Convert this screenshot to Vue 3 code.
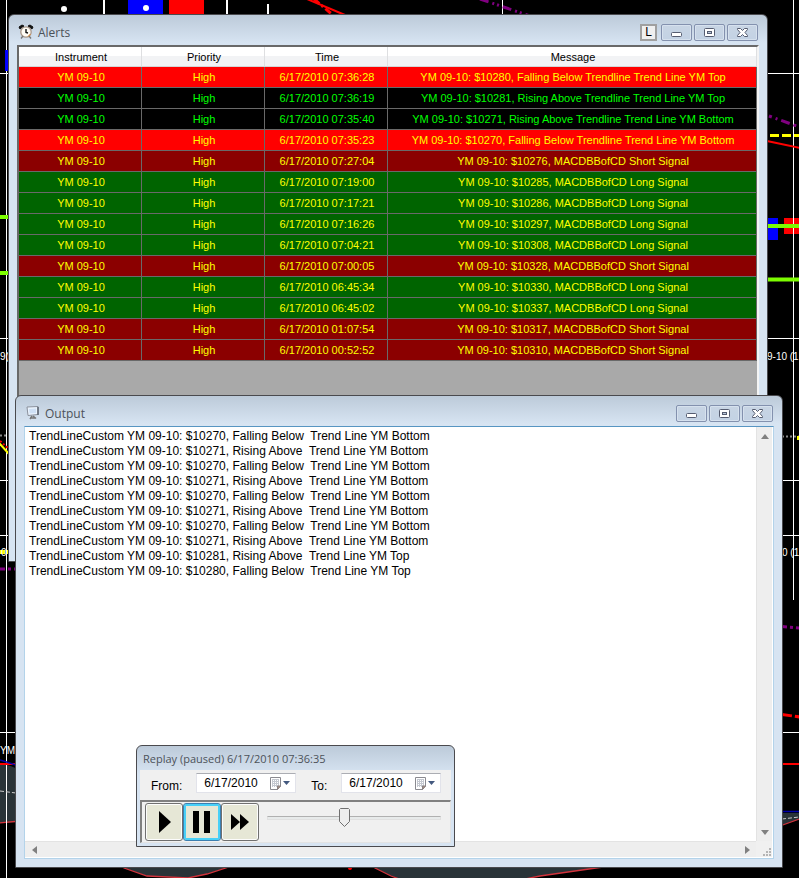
<script setup>
import { ref } from 'vue'

const columns = ['Instrument', 'Priority', 'Time', 'Message']

// tone: hot = below trendline, dark = above trendline, short / long = MACD signals
const alerts = ref([
  { time: '07:36:28', message: '$10280, Falling Below Trendline Trend Line YM Top', tone: 'hot' },
  { time: '07:36:19', message: '$10281, Rising Above Trendline Trend Line YM Top', tone: 'dark' },
  { time: '07:35:40', message: '$10271, Rising Above Trendline Trend Line YM Bottom', tone: 'dark' },
  { time: '07:35:23', message: '$10270, Falling Below Trendline Trend Line YM Bottom', tone: 'hot' },
  { time: '07:27:04', message: '$10276, MACDBBofCD Short Signal', tone: 'short' },
  { time: '07:19:00', message: '$10285, MACDBBofCD Long Signal', tone: 'long' },
  { time: '07:17:21', message: '$10286, MACDBBofCD Long Signal', tone: 'long' },
  { time: '07:16:26', message: '$10297, MACDBBofCD Long Signal', tone: 'long' },
  { time: '07:04:21', message: '$10308, MACDBBofCD Long Signal', tone: 'long' },
  { time: '07:00:05', message: '$10328, MACDBBofCD Short Signal', tone: 'short' },
  { time: '06:45:34', message: '$10330, MACDBBofCD Long Signal', tone: 'long' },
  { time: '06:45:02', message: '$10337, MACDBBofCD Long Signal', tone: 'long' },
  { time: '01:07:54', message: '$10317, MACDBBofCD Short Signal', tone: 'short' },
  { time: '00:52:52', message: '$10310, MACDBBofCD Short Signal', tone: 'short' },
])

const output = ref(
  [
    '$10270, Falling Below  Trend Line YM Bottom',
    '$10271, Rising Above  Trend Line YM Bottom',
    '$10270, Falling Below  Trend Line YM Bottom',
    '$10271, Rising Above  Trend Line YM Bottom',
    '$10270, Falling Below  Trend Line YM Bottom',
    '$10271, Rising Above  Trend Line YM Bottom',
    '$10270, Falling Below  Trend Line YM Bottom',
    '$10271, Rising Above  Trend Line YM Bottom',
    '$10281, Rising Above  Trend Line YM Top',
    '$10280, Falling Below  Trend Line YM Top',
  ]
    .map((s) => 'TrendLineCustom YM 09-10: ' + s)
    .join('\n')
)

const controls = ['Minimize', 'Maximize', 'Close']

const dates = ref([
  { id: 'from', label: 'From:', value: '6/17/2010' },
  { id: 'to', label: 'To:', value: '6/17/2010' },
])
const mode = ref('pause')
const speed = ref(44)
</script>

<template>
  <main class="desktop">
    <!-- chart behind the windows -->
    <svg class="chart" width="799" height="878" viewBox="0 0 799 878" aria-hidden="true">
      <g fill="#293338" stroke="#d2333c" stroke-width="1.3">
        <path d="M-2 764C8 764 14 767 20 771V822L-2 823z" stroke="none" />
        <path d="M-2 823L20 821" />
        <path d="M120 865L124 868L147 876L188 878L207 874L235 865" />
        <path d="M368 864L375 868L391 876L402 880H520L540 876L610 866" />
        <path d="M780 813H802V818L780 826z" stroke="none" />
        <path d="M780 826L802 818" />
      </g>
      <g fill="none">
        <g stroke="#fff">
          <path d="M6.500 0V878M502.500 0V16M793.500 0V600" />
          <path d="M104 0V16M227 0V16M268 4V16" stroke-width="2" />
          <path d="M0 73.500H9M767 73.500H799M0 338.500H9M767 338.500H799M0 480.500H9M782 480.500H799M0 535.500H9M782 535.500H799M0 732.500H16M782 732.500H799" />
        </g>
        <path d="M307 -1L345 15" stroke="#f00" stroke-width="2" />
        <path d="M314 -1L334 16" stroke="#f00" stroke-width="3" stroke-dasharray="7 3 2 3" />
        <path d="M480 -1L530 16" stroke="#800080" stroke-width="3" stroke-dasharray="9 4 2 3 2 4" />
        <path d="M769 116L802 128" stroke="#800080" stroke-width="3" stroke-dasharray="3 4 2 4 9 4" />
        <path d="M770 135.500H799" stroke="#ff0" stroke-width="3" stroke-dasharray="9 3" />
        <path d="M767 141L800 148" stroke="#f00" stroke-width="2" />
        <path d="M0 435.500H16M782 436.500H799" stroke="#888" stroke-width="2" stroke-dasharray="2 2" />
        <path d="M0 441L9 449" stroke="#f00" stroke-width="2" stroke-dasharray="2 2" />
        <path d="M-1 443L9 454" stroke="#ff0" stroke-width="2" />
        <path d="M0 569H16M782 626.500L800 628" stroke="#800080" stroke-width="3" stroke-dasharray="5 3 3 3" />
        <path d="M0 552H9" stroke="#ff0" stroke-width="4" stroke-dasharray="5 2" />
        <path d="M782 714.500L800 717" stroke="#f00" stroke-width="3" stroke-dasharray="10 3" />
        <path d="M0 764H16M782 764H799" stroke="#f00" stroke-width="2" />
        <path d="M0 760L16 765M782 811.500H799" stroke="#00a" stroke-width="1.500" />
        <path d="M0 791L16 793M782 819L799 817" stroke="#ccc" stroke-dasharray="4 2" />
      </g>
      <path d="M128 0H163V16H128zM5 50H9V71H5zM767 218H778V240H767z" fill="#00f" />
      <path d="M169 0H204V16H169zM784 218H799V234H784z" fill="#f00" />
      <path d="M793.500 216V236" stroke="#fff" />
      <path d="M0 217H9M0 273H9M767 226H799M767 279.500H799" stroke="#7cfc00" stroke-width="4" />
      <g fill="#fff">
        <circle cx="64" cy="9" r="3" />
        <circle cx="146" cy="8" r="3" />
      </g>
      <circle cx="350" cy="868" r="2" fill="#f00" />
      <rect x="797" y="436" width="2" height="4" fill="#ff0" />
      <g class="chart-text" fill="#fff">
        <text x="0" y="360">9(</text>
        <text x="767" y="360">9-10 (1</text>
        <text x="1" y="556">0</text>
        <text x="782" y="556">0 (1</text>
        <text x="0" y="754">YM</text>
      </g>
    </svg>

    <!-- Alerts -->
    <section class="window alerts" aria-label="Alerts">
      <header class="titlebar">
        <svg class="app-icon" viewBox="0 0 16 16" aria-hidden="true">
          <path d="M1 3L4 1L6 2L2 5zM15 3L12 1L10 2L14 5z" fill="#111" stroke="#111" />
          <circle cx="8" cy="8" r="5.200" fill="#fffdf6" stroke="#a9988a" stroke-width="1.300" />
          <path d="M8 5V8.500L10 9" fill="none" stroke="#111" stroke-width="1.400" />
          <path d="M5 12L3 14.500M11 12L13 14.500" stroke="#777" stroke-width="1.300" />
          <path d="M10 12.500L12.500 10" stroke="#e58a2c" />
        </svg>
        <h1 class="title">Alerts</h1>
        <button class="link-btn" type="button" aria-label="Link">L</button>
        <div class="controls">
          <button v-for="c in controls" :key="c" class="ctl" type="button" :aria-label="c">
            <svg width="29" height="15" viewBox="0 0 29 15" fill="#fff" stroke="#555c70" aria-hidden="true">
              <rect v-if="c === 'Minimize'" x="9.500" y="7.500" width="10" height="4" rx="1" />
              <template v-else-if="c === 'Maximize'">
                <rect x="9.500" y="3.500" width="10" height="8" rx="1" />
                <rect x="12.500" y="6.500" width="4" height="2" fill="#b9c7d9" />
              </template>
              <path v-else d="M9.500 3.500H12.500L14.500 5.500L16.500 3.500H19.500V4.500L17 7.500L19.500 10.500V11.500H16.500L14.500 9.500L12.500 11.500H9.500V10.500L12 7.500L9.500 4.500z" />
            </svg>
          </button>
        </div>
      </header>
      <div class="grid">
        <table>
          <colgroup>
            <col class="narrow" />
            <col class="narrow" />
            <col class="narrow" />
            <col />
          </colgroup>
          <thead>
            <tr>
              <th v-for="c in columns" :key="c" scope="col">{{ c }}</th>
            </tr>
          </thead>
          <tbody>
            <tr v-for="a in alerts" :key="a.time" :class="a.tone">
              <td>YM 09-10</td>
              <td>High</td>
              <td>6/17/2010 {{ a.time }}</td>
              <td>YM 09-10: {{ a.message }}</td>
            </tr>
          </tbody>
        </table>
      </div>
    </section>

    <!-- Output -->
    <section class="window output" aria-label="Output">
      <header class="titlebar">
        <svg class="app-icon" viewBox="0 0 16 16" aria-hidden="true">
          <path d="M2 2L13 1.500V9.500L3 10.500z" fill="#eaf3fd" stroke="#8b919c" />
          <path d="M4 4L11 3.500V8L4.500 8.500z" fill="#cfe0f5" />
          <path d="M13 2V10" stroke="#5d6470" stroke-width="1.500" />
          <path d="M7 11L5 14M8 11L11 13.500M5 13H10" stroke="#777" stroke-width="1.500" />
        </svg>
        <h1 class="title"><label for="log">Output</label></h1>
        <div class="controls">
          <button v-for="c in controls" :key="c" class="ctl" type="button" :aria-label="c">
            <svg width="29" height="15" viewBox="0 0 29 15" fill="#fff" stroke="#555c70" aria-hidden="true">
              <rect v-if="c === 'Minimize'" x="9.500" y="7.500" width="10" height="4" rx="1" />
              <template v-else-if="c === 'Maximize'">
                <rect x="9.500" y="3.500" width="10" height="8" rx="1" />
                <rect x="12.500" y="6.500" width="4" height="2" fill="#b9c7d9" />
              </template>
              <path v-else d="M9.500 3.500H12.500L14.500 5.500L16.500 3.500H19.500V4.500L17 7.500L19.500 10.500V11.500H16.500L14.500 9.500L12.500 11.500H9.500V10.500L12 7.500L9.500 4.500z" />
            </svg>
          </button>
        </div>
      </header>
      <div class="log-frame">
        <textarea id="log" class="log" wrap="off" readonly spellcheck="false" :value="output"></textarea>
        <div class="vbar">
          <button type="button" aria-label="Scroll up">
            <svg width="8" height="5" viewBox="0 0 8 5"><path d="M0 5L4 0L8 5z" fill="#808080" /></svg>
          </button>
          <button type="button" aria-label="Scroll down">
            <svg width="8" height="5" viewBox="0 0 8 5"><path d="M0 0L4 5L8 0z" fill="#808080" /></svg>
          </button>
        </div>
        <div class="hbar">
          <button type="button" aria-label="Scroll left">
            <svg width="5" height="8" viewBox="0 0 5 8"><path d="M5 0L0 4L5 8z" fill="#808080" /></svg>
          </button>
          <button type="button" aria-label="Scroll right">
            <svg width="5" height="8" viewBox="0 0 5 8"><path d="M0 0L5 4L0 8z" fill="#808080" /></svg>
          </button>
        </div>
        <div class="grip">
          <svg width="8" height="8" viewBox="0 0 8 8" fill="#b4b4b4" aria-hidden="true">
            <path d="M6 0H8V2H6zM3 3H5V5H3zM6 3H8V5H6zM0 6H2V8H0zM3 6H5V8H3zM6 6H8V8H6z" />
          </svg>
        </div>
      </div>
    </section>

    <!-- Replay -->
    <section class="window replay" aria-label="Replay">
      <header class="titlebar">
        <h1 class="title">Replay (paused) 6/17/2010 07:36:35</h1>
      </header>
      <div class="range">
        <div v-for="d in dates" :key="d.id" class="field">
          <label :for="d.id">{{ d.label }}</label>
          <div class="date">
            <input :id="d.id" v-model="d.value" type="text" />
            <button type="button" :aria-label="'Pick date ' + d.id">
              <svg width="20" height="13" viewBox="0 0 20 13" aria-hidden="true">
                <path d="M.5.5H10.500V9L7.500 12.500H.5z" fill="#fff" stroke="#8a8a90" />
                <path d="M2 2.500H9M2 4.500H9M2 6.500H9M2 8.500H9M2.500 2V10M4.500 2V10M6.500 2V10M8.500 2V9" stroke="#c4c8d0" />
                <path d="M10.500 9H7.500V12.500z" fill="#a98f80" stroke="#8a8080" />
                <path d="M13 4H20L16.500 8z" fill="#44597f" />
              </svg>
            </button>
          </div>
        </div>
      </div>
      <div class="player">
        <button class="play" :class="{ active: mode === 'play' }" type="button" aria-label="Play" @click="mode = 'play'">
          <svg width="32" height="32" viewBox="0 0 32 32"><path d="M11 5L23 16L11 27z" /></svg>
        </button>
        <button class="play" :class="{ active: mode === 'pause' }" type="button" aria-label="Pause" @click="mode = 'pause'">
          <svg width="32" height="32" viewBox="0 0 32 32"><path d="M7 5H13V27H7zM18 5H24V27H18z" /></svg>
        </button>
        <button class="play" :class="{ active: mode === 'fast' }" type="button" aria-label="Fast forward" @click="mode = 'fast'">
          <svg width="32" height="32" viewBox="0 0 32 32"><path d="M7 8L16 16L7 24zM16 8L25 16L16 24z" /></svg>
        </button>
        <input v-model="speed" class="speed" type="range" min="0" max="100" aria-label="Replay speed" />
      </div>
    </section>
  </main>
</template>

<style scoped>
.desktop {
  position: relative;
  min-height: 100vh;
  overflow: hidden;
  background: #000;
  font-family: "Liberation Sans", Arial, sans-serif;
  font-size: 12px;
  color: #000;
}
.chart {
  position: absolute;
  top: 0;
  left: 0;
}
.chart-text {
  font-size: 10px;
}
button {
  margin: 0;
  padding: 0;
  border: 0;
  background: none;
}

/* ===== window frame ===== */
.window {
  position: absolute;
  box-sizing: border-box;
  display: flex;
  flex-direction: column;
  padding: 0 8px 8px;
  border: 1px solid #4a4a4e;
  border-radius: 6px 6px 0 0;
  background: linear-gradient(180deg, #bccad9 0, #d7e4f2 28px);
}
.alerts {
  top: 14px;
  left: 8px;
  right: 31px;
  height: 548px;
}
.output {
  top: 395px;
  left: 15px;
  right: 16px;
  bottom: 10px;
}
.titlebar {
  display: flex;
  align-items: center;
  height: 30px;
  flex: none;
  padding: 4px 1px 0;
  box-sizing: border-box;
}
.app-icon {
  width: 16px;
  height: 16px;
  flex: none;
}
.title {
  flex: 1;
  margin: 0 0 0 4px;
  padding-top: 2px;
  font: 12px/16px "Open Sans", "Noto Sans", sans-serif;
  color: #4c5259;
}
.link-btn {
  width: 17px;
  height: 17px;
  margin-right: 4px;
  border: 2px solid #a0a0a0;
  background: #f0f0f0;
  font: 12px/13px "Liberation Sans", Arial, sans-serif;
  color: #000;
}
.controls {
  display: flex;
  gap: 2px;
}
.ctl {
  width: 31px;
  height: 17px;
  border: 1px solid #8391ae;
  border-radius: 2px;
  background: linear-gradient(180deg, #c8d5e4, #c3d2e4);
  box-shadow: inset 0 0 0 1px #d6e1ee;
}
.ctl svg {
  display: block;
}

/* ===== alerts grid ===== */
.grid {
  flex: 1;
  border-style: solid;
  border-width: 2px 2px 3px 2px;
  border-color: #696969 #f4f4f4 #f4f4f4 #696969;
  background: #a9a9a9;
}
table {
  width: 100%;
  table-layout: fixed;
  border-collapse: separate;
  border-spacing: 0;
  font-size: 11px;
}
.narrow {
  width: 123px;
}
th,
td {
  box-sizing: border-box;
  height: 21px;
  padding: 0 0 0 2px;
  line-height: 16px;
  text-align: center;
  font-weight: 400;
  white-space: nowrap;
  overflow: hidden;
}
th {
  height: 20px;
  border-right: 1px solid #dedfe1;
  border-bottom: 1px solid #d5d5d5;
  background: linear-gradient(180deg, #fff 45%, #f2f3f5 50%);
}
td {
  border-right: 1px solid #696969;
  border-bottom: 1px solid #696969;
  color: #ff0;
}
.hot td {
  background: #f00;
}
.dark td {
  background: #000;
  color: #0f0;
}
.short td {
  background: #8b0000;
}
.long td {
  background: #006400;
}

/* ===== output log ===== */
.log-frame {
  flex: 1;
  display: grid;
  grid-template-columns: 1fr 16px;
  grid-template-rows: 1fr 16px;
  min-height: 0;
  padding: 0 1px 1px 0;
  border: 1px solid #b3d3ea;
  border-top-color: #5795c2;
  background: #fff;
}
.log {
  min-width: 0;
  margin: 0;
  padding: 2px 4px;
  border: 0;
  outline: 0;
  resize: none;
  overflow: hidden;
  background: #fff;
  font: 12px/15px "Liberation Sans", Arial, sans-serif;
  color: #000;
}
.vbar,
.hbar {
  display: flex;
  justify-content: space-between;
  background: #eee;
}
.vbar {
  flex-direction: column;
  border-left: 1px solid #e3e3e3;
}
.hbar {
  border-top: 1px solid #e3e3e3;
}
.vbar button {
  height: 18px;
}
.hbar button {
  width: 18px;
}
.vbar svg,
.hbar svg {
  display: block;
  margin: auto;
}
.grip {
  display: flex;
  align-items: flex-end;
  justify-content: flex-end;
  padding: 1px;
  background: #f0f0f0;
}

/* ===== replay ===== */
.replay {
  left: 136px;
  bottom: 31px;
  width: 319px;
  padding: 0 3px 3px;
}
.replay .titlebar {
  height: 24px;
  padding: 0;
}
.replay .title {
  margin-left: 3px;
  font-size: 11px;
}
.range {
  display: flex;
  gap: 15px;
  padding: 3px 11px 7px;
  background: #f0f0f0;
}
.field {
  display: flex;
  align-items: center;
  gap: 14px;
}
.field label {
  padding-top: 5px;
}
.date {
  display: flex;
  align-items: center;
  width: 100px;
  height: 20px;
  box-sizing: border-box;
  border: 1px solid #e2e3ea;
  border-top-color: #abadb3;
  background: #fff;
}
.date input {
  flex: 1;
  min-width: 0;
  padding: 0 0 0 7px;
  border: 0;
  outline: 0;
  background: none;
  font: 12px/16px "Liberation Sans", Arial, sans-serif;
}
.date button {
  margin-right: 5px;
}
.date svg {
  display: block;
}
.player {
  display: flex;
  align-items: center;
  padding: 1px 9px 1px 3px;
  border-style: solid;
  border-width: 2px 1px 1px 2px;
  border-color: #808080 #e3e3e3 #e3e3e3 #808080;
  background: #f0f0f0;
}
.play {
  box-sizing: border-box;
  width: 38px;
  height: 38px;
  padding: 2px;
  border: 1px solid #707070;
  border-radius: 3px;
  background: #e6e7d6;
  box-shadow: inset 0 0 0 1px #fcfcfc;
}
.play.active {
  border-color: #3c7fb1;
  box-shadow: inset 0 0 0 2px #48d0f7;
}
.play svg {
  display: block;
}
.speed {
  flex: 1;
  min-width: 0;
  height: 20px;
  margin: 0 0 8px 8px;
  appearance: none;
  background: none;
}
.speed::-webkit-slider-runnable-track {
  height: 4px;
  box-sizing: border-box;
  border: 1px solid #e0e0e0;
  border-top-color: #b0b0b0;
  background: #e7eaea;
}
.speed::-webkit-slider-thumb {
  appearance: none;
  width: 11px;
  height: 19px;
  margin-top: -9px;
  background: url("data:image/svg+xml,%3Csvg xmlns='http://www.w3.org/2000/svg' width='11' height='19'%3E%3Cpath d='M1.500.5H9.500L10.500 1.500V13.500L5.500 18.500L.5 13.500V1.500z' fill='%23eee' stroke='%23707070'/%3E%3C/svg%3E");
}
</style>
